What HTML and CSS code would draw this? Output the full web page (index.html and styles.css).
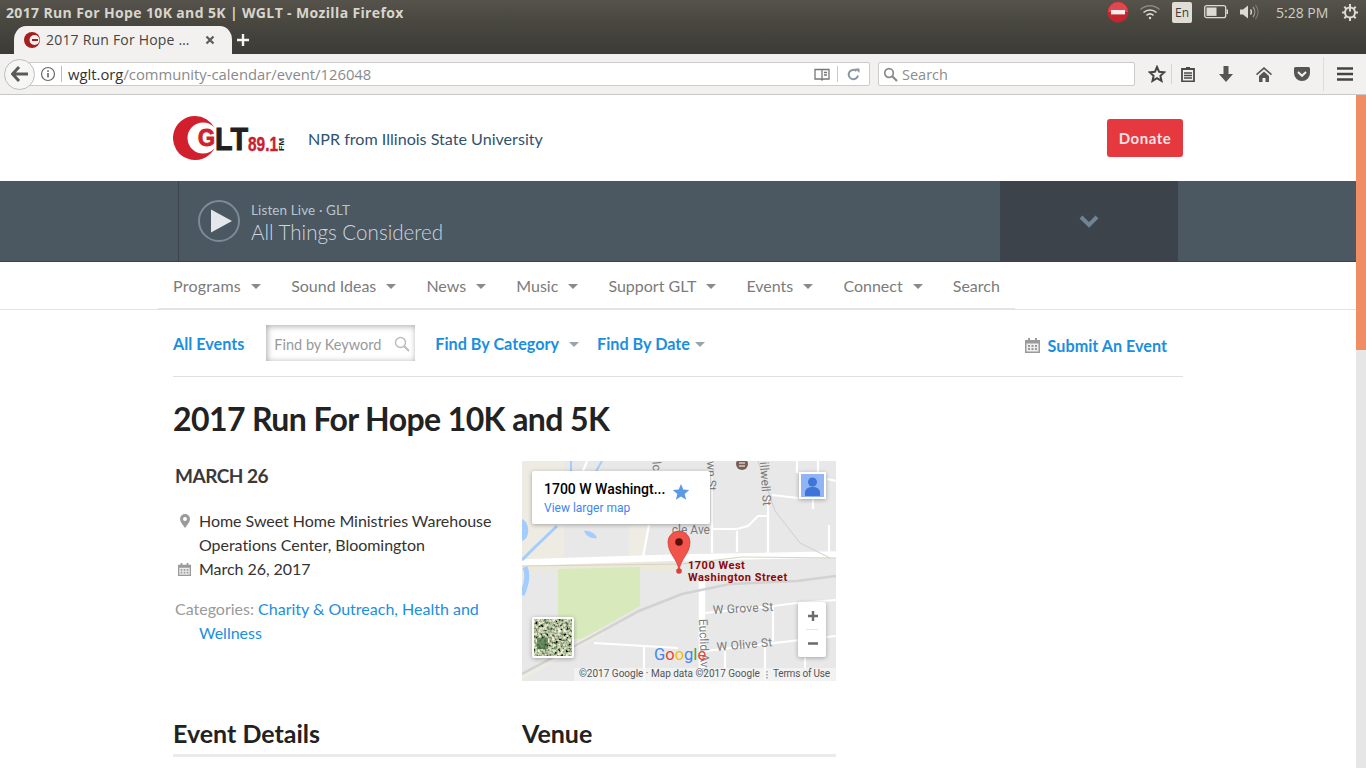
FILE: index.html
```html
<!DOCTYPE html>
<html lang="en">
<head>
<meta charset="utf-8">
<title>2017 Run For Hope 10K and 5K | WGLT</title>
<link rel="stylesheet" href="styles.css">
</head>
<body>
<div class="chrome">
  <div class="titlebar">
    <span class="wintitle">2017 Run For Hope 10K and 5K | WGLT - Mozilla Firefox</span>
    <div class="tray">
      <svg class="t-stop" width="24" height="24" viewBox="0 0 24 24"><circle cx="12" cy="12" r="10.500" fill="#c5252f"/><path d="M2 12a10 10 0 0 1 20 0z" fill="#e0484f"/><rect x="5" y="10" width="14" height="4.400" fill="#f4eeee"/></svg>
      <svg class="t-wifi" width="22" height="18" viewBox="0 0 22 18" fill="none" stroke="#dcdad5" stroke-width="1.500"><path d="M1.500 6.500a14 14 0 0 1 19 0" stroke="#8a8883"/><path d="M4.500 9.500a10 10 0 0 1 13 0"/><path d="M7.500 12.300a5.500 5.500 0 0 1 7 0"/><circle cx="11" cy="15" r="1.200" fill="#dcdad5" stroke="none"/></svg>
      <span class="t-en">En</span>
      <svg class="t-bat" width="24" height="14" viewBox="0 0 24 14"><rect x=".7" y=".7" width="21" height="12" rx="2" fill="none" stroke="#dcdad5" stroke-width="1.300"/><rect x="2.500" y="2.500" width="10" height="8.400" fill="#dcdad5"/><rect x="22.500" y="4.500" width="1.500" height="4.500" fill="#dcdad5"/></svg>
      <svg class="t-vol" width="20" height="18" viewBox="0 0 20 18" fill="none"><path d="M1 6.500h3l5-4v13l-5-4H1z" fill="#dcdad5"/><path d="M11.500 6.500a4 4 0 0 1 0 5" stroke="#dcdad5" stroke-width="1.300"/><path d="M14 4a8 8 0 0 1 0 10" stroke="#9a9893" stroke-width="1.300"/><path d="M16.500 2a11 11 0 0 1 0 14" stroke="#77756f" stroke-width="1.300"/></svg>
      <span class="t-time">5:28 PM</span>
      <svg class="t-gear" width="18" height="18" viewBox="0 0 18 18" fill="none" stroke="#dcdad5"><circle cx="9" cy="9.500" r="5" stroke-width="2"/><path d="M9 1.500v7" stroke-width="2"/><path d="M9 1v3M9 15v3M1 9.500h3M14 9.500h3M3.300 3.800l2 2M12.700 13.200l2 2M3.300 15.200l2-2M12.700 5.800l2-2" stroke-width="2"/></svg>
    </div>
  </div>
  <div class="tabbar">
    <div class="tab">
      <svg class="favicon" width="16" height="16" viewBox="0 0 16 16"><circle cx="8" cy="8" r="8" fill="#a3201f"/><circle cx="10.500" cy="8" r="5" fill="#f2f1ef"/><path d="M8 7h6v2H8z" fill="#a3201f"/></svg>
      <span class="tabtitle">2017 Run For Hope …</span>
      <svg class="tabclose" width="10" height="10" viewBox="0 0 10 10"><path d="M1.500 1.500l7 7M8.500 1.500l-7 7" stroke="#5c5b58" stroke-width="2.200"/></svg>
    </div>
    <svg class="newtab" width="14" height="14" viewBox="0 0 14 14"><path d="M7 1v12M1 7h12" stroke="#f5f5f3" stroke-width="2.400"/></svg>
  </div>
  <div class="navbar">
    <div class="back"><svg width="18" height="16" viewBox="0 0 18 16"><path d="M8 1L1.500 8 8 15M2 8h15" fill="none" stroke="#5a5a58" stroke-width="3"/></svg></div>
    <div class="urlbar">
      <svg class="info" width="16" height="16" viewBox="0 0 16 16"><circle cx="8" cy="8" r="6.500" fill="none" stroke="#666" stroke-width="1.200"/><rect x="7.200" y="7" width="1.600" height="4.500" fill="#666"/><rect x="7.200" y="4.300" width="1.600" height="1.600" fill="#666"/></svg>
      <span class="urlsep"></span>
      <span class="url"><b>wglt.org</b>/community-calendar/event/126048</span>
      <svg class="reader" width="16" height="13" viewBox="0 0 16 13" fill="none" stroke="#777" stroke-width="1.300"><path d="M1 1.500h14v9.500H9l-1 1-1-1H1z"/><path d="M8 1.500V11"/><path d="M10 4.500h3M10 7h3"/></svg>
      <span class="urlsep2"></span>
      <svg class="reload" width="13" height="13" viewBox="0 0 13 13" fill="none"><path d="M11 7.500A4.700 4.700 0 1 1 9.500 3" stroke="#8a96a3" stroke-width="2"/><path d="M8 .5h4.500V5z" fill="#8a96a3"/></svg>
    </div>
    <div class="searchbar">
      <svg width="15" height="15" viewBox="0 0 15 15" fill="none" stroke="#8a8a8a" stroke-width="1.700"><circle cx="6" cy="6" r="4.300"/><path d="M9.300 9.300L14 14" stroke-width="2.200"/></svg>
      <span>Search</span>
    </div>
    <div class="tools">
      <svg class="i-star" width="18" height="18" viewBox="0 0 18 18"><path d="M9 2l2.100 4.800 5.200.5-3.900 3.500 1.100 5.100L9 13.200l-4.500 2.700 1.100-5.100L1.700 7.300l5.200-.5z" fill="none" stroke="#444" stroke-width="2"/></svg>
      <span class="toolsep"></span>
      <svg class="i-list" width="14" height="16" viewBox="0 0 14 16"><path d="M1 3h12v12.500H1z" fill="none" stroke="#4a4a4a" stroke-width="1.800"/><path d="M5 1h4v3H5z" fill="#4a4a4a"/><path d="M3 7h8M3 9.500h8M3 12h8" stroke="#4a4a4a" stroke-width="1.300"/></svg>
      <svg class="i-down" width="14" height="16" viewBox="0 0 14 16"><path d="M4.500 0h5v8H14l-7 8-7-8h4.500z" fill="#555"/></svg>
      <svg class="i-home" width="16" height="16" viewBox="0 0 16 16"><path d="M8 1L0 8l1 1.200 7-6 7 6L16 8z" fill="#555"/><path d="M3 10l5-4.500 5 4.500v6H9.500v-4h-3v4H3z" fill="#555"/></svg>
      <svg class="i-pocket" width="16" height="14" viewBox="0 0 16 14"><path d="M1.500 0h13A1.500 1.500 0 0 1 16 1.500V6A8 8 0 0 1 0 6V1.500A1.500 1.500 0 0 1 1.500 0z" fill="#555"/><path d="M4 5l4 3.800L12 5" fill="none" stroke="#f2f1ef" stroke-width="2"/></svg>
      <span class="toolsep2"></span>
      <svg class="i-menu" width="16" height="14" viewBox="0 0 16 14"><path d="M0 1.500h16M0 7h16M0 12.500h16" stroke="#444" stroke-width="2.600"/></svg>
    </div>
  </div>
</div>

<div class="viewport">
  <main class="page">
    <header class="site-head">
      <svg class="logo" width="113" height="46" viewBox="0 0 113 46">
        <path fill-rule="evenodd" d="M22 1a22 22 0 0 1 19.500 11.800A15.500 15.500 0 0 0 30 7.500a15.500 15.500 0 0 0 0 31 15.500 15.500 0 0 0 11.500-5.300A22 22 0 1 1 22 1z" fill="#d11f2d"/>
        <text class="logo-g" x="25" y="31" textLength="17" lengthAdjust="spacingAndGlyphs">G</text>
        <text class="logo-lt" x="42" y="35" textLength="33" lengthAdjust="spacingAndGlyphs">LT</text>
        <text class="logo-num" x="75" y="36" textLength="30" lengthAdjust="spacingAndGlyphs">89.1</text>
        <text class="logo-fm" transform="translate(111 36) rotate(-90)" textLength="13" lengthAdjust="spacingAndGlyphs">FM</text>
      </svg>
      <span class="tagline">NPR from Illinois State University</span>
      <a class="donate">Donate</a>
    </header>

    <section class="player">
      <div class="player-main">
        <svg class="play" width="42" height="42" viewBox="0 0 42 42"><circle cx="21" cy="21" r="20" fill="none" stroke="#7b8b98" stroke-width="2"/><path d="M13 9.500L34 21 13 32.500z" fill="#e4e8ed"/></svg>
        <div class="player-text">
          <div class="listen">Listen Live · GLT</div>
          <div class="show">All Things Considered</div>
        </div>
      </div>
      <div class="player-toggle"><svg width="20" height="13" viewBox="0 0 20 13"><path d="M2 2l8 8 8-8" fill="none" stroke="#6f8494" stroke-width="4"/></svg></div>
    </section>

    <nav class="mainnav">
      <ul class="navlist">
        <li class="navitem caret">Programs</li>
        <li class="navitem caret">Sound Ideas</li>
        <li class="navitem caret">News</li>
        <li class="navitem caret">Music</li>
        <li class="navitem caret">Support GLT</li>
        <li class="navitem caret">Events</li>
        <li class="navitem caret">Connect</li>
        <li class="navitem">Search</li>
      </ul>
    </nav>

    <div class="content">
      <div class="filters">
        <a class="fl all">All Events</a>
        <div class="kw"><span>Find by Keyword</span><svg width="16" height="16" viewBox="0 0 16 16" fill="none" stroke="#bbb" stroke-width="1.400"><circle cx="6.500" cy="6.500" r="5"/><path d="M10 10l5 5" stroke-width="1.800"/></svg></div>
        <a class="fl cat caret2">Find By Category</a>
        <a class="fl date caret2">Find By Date</a>
        <a class="fl submit"><svg width="15" height="15" viewBox="0 0 15 15"><path d="M0 2h15v13H0z" fill="#9a9a9a"/><path d="M3 0h2v3H3zM10 0h2v3h-2z" fill="#9a9a9a"/><path d="M1.500 5.500h12V13.500h-12z" fill="#eee"/><path d="M3 7h2v2H3zM6.500 7h2v2h-2zM10 7h2v2h-2zM3 10h2v2H3zM6.500 10h2v2h-2zM10 10h2v2h-2z" fill="#9a9a9a"/></svg>Submit An Event</a>
      </div>

      <h1 class="title">2017 Run For Hope 10K and 5K</h1>

      <div class="event">
        <div class="meta">
          <h2 class="when">MARCH 26</h2>
          <div class="row">
            <svg class="ri" width="10" height="14" viewBox="0 0 10 14"><path fill-rule="evenodd" d="M5 0a5 5 0 0 1 5 5c0 3-3 6-5 9-2-3-5-6-5-9a5 5 0 0 1 5-5zm0 3a2 2 0 1 0 0 4 2 2 0 0 0 0-4z" fill="#9a9a9a"/></svg>
            <span>Home Sweet Home Ministries Warehouse Operations Center, Bloomington</span>
          </div>
          <div class="row">
            <svg class="ri cal" width="13" height="13" viewBox="0 0 15 15"><path d="M0 2h15v13H0z" fill="#9a9a9a"/><path d="M3 0h2v3H3zM10 0h2v3h-2z" fill="#9a9a9a"/><path d="M1.500 5.500h12V13.500h-12z" fill="#eee"/><path d="M3 7h2v2H3zM6.500 7h2v2h-2zM10 7h2v2h-2zM3 10h2v2H3zM6.500 10h2v2h-2zM10 10h2v2h-2z" fill="#9a9a9a"/></svg>
            <span>March 26, 2017</span>
          </div>
          <p class="cats"><span class="cats-l">Categories:</span> <a>Charity &amp; Outreach</a>, <a>Health and</a><br><a>Wellness</a></p>
        </div>
        <svg class="map" width="314" height="220" viewBox="0 0 314 220">
          <defs>
            <filter id="aerial" x="0" y="0" width="100%" height="100%">
              <feTurbulence type="fractalNoise" baseFrequency=".36" numOctaves="2" seed="7"/>
              <feColorMatrix type="matrix" values="1.900 0 0 0 -.52  1.900 0 0 0 -.46  1.500 0 0 0 -.42  0 0 0 0 1"/>
            </filter>
          </defs>
          <rect width="314" height="220" fill="#e8e8e8"/>
          <path d="M0 0h42v98H0z" fill="#eeebe3"/>
          <path d="M42 0h66v64H42z" fill="#e8e8e8"/>
          <path d="M107 64h20l-5 33h-15z" fill="#efece3"/>
          <path d="M0 104l157-4v10H0z" fill="#ebe8dc"/>
          <path d="M36 108l82-2v39l-58 33h-8l-16-21z" fill="#d8e9bc"/>
          <path d="M0 216l62-36 20-10" fill="none" stroke="#eeebe3" stroke-width="6"/>

          <g class="road">
            <path d="M190 0v92M190 68h25l11-3 10-10h10M215 70v21M246 34v58M250 34l26 3M305 18l9 2M291 38v10M307 64v28M275 0v12M296 0v12M65 0l-4 10M127 64l-6 32"/>
            <path d="M183 152l68-7 24-3 39-3M251 145v35M183 190l131-15M203 190v25M243 185v35M283 195v12M72 182l84 5M122 185v35"/>
          </g>
          <path class="road-main" d="M180 120v87"/>
          <path class="road-main" d="M0 101.500l157-5 157-3"/>
          <path d="M0 105l160-2 60-7 94 1" stroke="#d8d3bf" stroke-width="1" fill="none"/>
          <path class="rail" d="M0 213l62-33 55-30 43-17 48-10 67-3 39-5"/>
          <path d="M236 0l17 50 25 32 30 15" fill="none" stroke="#cfcfcf" stroke-width="1"/>
          <g fill="none" stroke="#a3ccff">
            <path d="M3 106c4 9 1 19-3 28" stroke-width="5"/>
            <path d="M0 99l12-12 23-22" stroke-width="3"/>
            <path d="M49 0v12M80 0l-7 12" stroke-width="2"/>
            <path d="M0 58c5 2 7 9 6 14-1 5-3 7-6 8z" fill="#a3ccff" stroke="none"/>
            <path d="M62 70c5-1 11 2 13 7-6 1-11-2-13-7z" fill="#a3ccff" stroke="none"/>
          </g>
          <text x="188" y="73" text-anchor="end" class="mlabel">cle Ave</text>
          <text x="191" y="153" class="mlabel big" transform="rotate(-3 191 153)">W Grove St</text>
          <text x="195" y="190" class="mlabel big" transform="rotate(-5 195 190)">W Olive St</text>
          <text x="177" y="158" class="mlabel" transform="rotate(88 177 158)">Euclid Ave</text>
          <text x="241" y="45" text-anchor="end" class="mlabel" transform="rotate(86 241 45)">illwell St</text>
          <text x="186" y="30" text-anchor="end" class="mlabel" transform="rotate(88 186 30)">wn St</text>
          <text x="131" y="10" text-anchor="end" class="mlabel" transform="rotate(86 131 10)">lc</text>
          <circle cx="220" cy="3" r="6" fill="#7b5e52"/>
          <path d="M217 2h6M217 5h6" stroke="#fff" stroke-width="1"/>
          <path d="M157 110c-1-12-11-17-11-29a11 11 0 0 1 22 0c0 12-10 17-11 29z" fill="#f0544b" stroke="#c8372f" stroke-width=".7"/>
          <circle cx="157" cy="81" r="3.800" fill="#5b0f0c"/>
          <circle cx="157" cy="110" r="2.800" fill="#dc3f38"/>
          <text x="166" y="108" class="pinlabel">1700 West</text>
          <text x="166" y="120" class="pinlabel">Washington Street</text>
          <rect x="10" y="10" width="178" height="53" rx="2" fill="#fff" class="mshadow"/>
          <text x="22" y="33" class="cardtitle">1700 W Washingt...</text>
          <path d="M159 23l2.300 5.500 5.900.5-4.500 3.900 1.400 5.800-5.100-3.100-5.100 3.100 1.400-5.800-4.500-3.900 5.900-.5z" fill="#5b9ae8"/>
          <text x="22" y="51" class="cardlink">View larger map</text>
          <rect x="277" y="11" width="27" height="27" fill="#fff" class="mshadow"/>
          <rect x="279" y="13" width="23" height="23" fill="#90b4f4"/>
          <circle cx="290.500" cy="21" r="4.500" fill="#3f74d8"/>
          <path d="M283 35v-4a7 5 0 0 1 15 0v4z" fill="#3f74d8"/>
          <rect x="10" y="156" width="42" height="41" rx="2" fill="#fff" class="mshadow"/>
          <rect x="12" y="158" width="38" height="37" filter="url(#aerial)"/>
          <path d="M15 177h11v11H15z" fill="#3e6a3c" opacity=".7"/>
          <path d="M29 158v37M12 172h38" stroke="#c9c6b0" stroke-width="1" opacity=".5"/>
          <rect x="276" y="141" width="28" height="55" rx="2" fill="#fff" class="mshadow"/>
          <path d="M284 168.500h12" stroke="#e5e5e5" stroke-width="1"/>
          <path d="M286 155h10M291 150v10M286 182.500h10" stroke="#6b6b6b" stroke-width="2.400"/>
          <text x="132" y="199" class="google"><tspan fill="#4285f4">G</tspan><tspan fill="#ea4335">o</tspan><tspan fill="#fbbc05">o</tspan><tspan fill="#4285f4">g</tspan><tspan fill="#34a853">l</tspan><tspan fill="#ea4335">e</tspan></text>
          <rect x="52" y="207" width="262" height="13" fill="#f5f5f5" opacity=".75"/>
          <text x="57" y="216" class="copy">©2017 Google · Map data ©2017 Google</text>
          <text x="251" y="216" class="copy terms">Terms of Use</text>
          <path d="M245 210v1.500M245 213v1.500M245 216v1.500" stroke="#777"/>
        </svg>
      </div>

      <div class="lower">
        <h2 class="sec sec-a">Event Details</h2>
        <h2 class="sec sec-b">Venue</h2>
      </div>
    </div>
  </main>
  <div class="scroll"><div class="thumb"></div></div>
</div>
</body>
</html>
```
FILE: styles.css
```css
* { box-sizing: border-box; }
html, body { margin: 0; padding: 0; height: 768px; overflow: hidden; background: #fff; }
body { font-family: "Lato", sans-serif; color: #333; display: flex; flex-direction: column; }
a { color: #1a8fe0; text-decoration: none; }
svg { display: block; flex: none; }

/* browser chrome */
.chrome { height: 95px; flex: none; font-family: "Open Sans", sans-serif; }
.titlebar { height: 24px; display: flex; align-items: center; justify-content: space-between; padding-left: 6px; background: linear-gradient(#55534b, #47463f); }
.wintitle { font-size: 14px; font-weight: 700; color: #d8d5cd; letter-spacing: .36px; }
.tray { display: flex; align-items: center; height: 24px; }
.t-stop { margin-right: 9px; }
.t-wifi { margin-right: 11px; }
.t-en { width: 20px; height: 21px; background: #e0ddd6; color: #3c3b37; border-radius: 2px; font-size: 12px; text-align: center; line-height: 21px; margin-right: 12px; }
.t-bat { margin-right: 11px; }
.t-vol { margin-right: 16px; }
.t-time { color: #cfcdc7; font-size: 14px; width: 53px; white-space: nowrap; margin-right: 12px; margin-left: 1px; }
.t-gear { margin-right: 7px; }

.tabbar { height: 30px; background: linear-gradient(#47463f, #3c3b36); display: flex; align-items: flex-end; padding-left: 14px; }
.tab { width: 218px; height: 28px; background: #f2f1ef; border-radius: 12px 12px 0 0 / 14px 14px 0 0; display: flex; align-items: center; padding-left: 10px; color: #444; }
.favicon { margin-right: 6px; }
.tabtitle { font-size: 14px; letter-spacing: .2px; width: 157px; white-space: nowrap; margin-top: -2px; }
.tabclose { margin-left: 2px; }
.newtab { margin: 0 0 7px 4px; }

.navbar { height: 41px; background: #f2f1ef; border-bottom: 1px solid #c9c9c7; display: flex; align-items: center; padding-left: 5px; }
.back { width: 31px; height: 31px; border-radius: 50%; background: #f6f6f5; border: 1px solid #bdbdbb; display: flex; align-items: center; justify-content: center; z-index: 1; flex: none; margin-left: -1px; }
.urlbar { width: 841px; margin-left: -6px; height: 24px; background: #fff; border: 1px solid #cbcbc9; border-radius: 0 2px 2px 0; display: flex; align-items: center; padding-left: 10px; }
.urlsep { width: 1px; height: 16px; background: #bbb; margin: 0 6px 0 5px; }
.url { font-size: 14.800px; color: #8a8a8a; width: 746px; white-space: nowrap; }
.url b { color: #333; font-weight: 400; }
.urlsep2 { width: 1px; height: 16px; background: #ccc; margin: 0 9px 0 7px; }
.searchbar { width: 257px; margin-left: 8px; height: 24px; background: #fff; border: 1px solid #cbcbc9; border-radius: 2px; display: flex; align-items: center; padding-left: 4px; gap: 4px; color: #8c8c8c; font-size: 14.500px; }
.tools { display: flex; align-items: center; height: 40px; padding-left: 13px; }
.toolsep { width: 1px; height: 20px; background: #d5d5d3; margin: 0 9px 0 5px; }
.i-down { margin-left: 24px; }
.i-home { margin-left: 23px; }
.i-pocket { margin-left: 22px; }
.toolsep2 { width: 1px; height: 34px; background: #dcdcda; margin: 0 13px 0 13px; }

/* page */
.viewport { flex: 1; display: flex; min-height: 0; }
.page { flex: 1; min-width: 0; overflow: hidden; }
.scroll { width: 10px; background: #e6e6e6; flex: none; }
.thumb { height: 255px; background: #f08d65; }

.site-head { height: 86px; display: flex; align-items: center; padding: 0 173px; }
.logo-g { font: 700 23px "Liberation Sans", sans-serif; fill: #d11f2d; stroke: #d11f2d; stroke-width: 1px; }
.logo-lt { font: 700 32px "Liberation Sans", sans-serif; fill: #231f20; stroke: #231f20; stroke-width: 1px; }
.logo-num { font: 700 19.500px "Liberation Sans", sans-serif; fill: #c8202f; stroke: #c8202f; stroke-width: .4px; }
.logo-fm { font: 700 6.500px "Liberation Sans", sans-serif; fill: #231f20; }
.tagline { margin-left: 22px; font-size: 16.100px; color: #2f5270; font-weight: 400; }
.donate { margin-left: auto; width: 76px; height: 38px; background: #e5383f; color: #f1e4e4; border-radius: 3px; font-size: 15px; font-weight: 700; text-align: center; line-height: 38px; letter-spacing: .5px; }

.player { height: 81px; background: #4b5761; display: flex; border-bottom: 1px solid #3c434a; padding-left: 178px; padding-right: 178px; }
.player-main { flex: 1; border-left: 1px solid #3c434a; display: flex; align-items: center; padding-left: 19px; }
.player-text { margin-left: 11px; padding-top: 5px; }
.listen { font-size: 13.500px; color: #b9c5ce; line-height: 17px; letter-spacing: .12px; }
.show { font-size: 20.600px; font-weight: 300; color: #cdd6dd; line-height: 27px; }
.player-toggle { width: 178px; background: #3c434a; display: flex; align-items: center; justify-content: center; margin-bottom: -1px; }

.mainnav { height: 48px; border-bottom: 1px solid #e3e3e3; padding-left: 158px; }
.navlist { list-style: none; margin: 0; padding: 0 15px; width: 857px; height: 48px; display: flex; align-items: center; border-bottom: 2px solid #e3e3e3; font-size: 16px; color: #7b7b7b; }
.navitem { white-space: nowrap; margin-right: 30.100px; }
.navitem:first-child { letter-spacing: .25px; }
.navitem:last-child { margin-right: 0; }
.caret::after { content: ""; display: inline-block; margin-left: 10px; vertical-align: 3px; border: 5px solid transparent; border-top: 5px solid #8a8a8a; border-bottom: 0; }

.content { padding: 0 173px; box-sizing: content-box; width: 1010px; }
.filters { height: 67px; display: flex; align-items: center; border-bottom: 1px solid #e0e0e0; font-size: 16.200px; }
.fl { font-weight: 700; white-space: nowrap; padding-top: 1px; }
.kw { margin-left: 22px; width: 149px; height: 36px; display: flex; align-items: center; justify-content: space-between; padding: 2px 5px 0 8px; box-shadow: inset 1px 1px 6px #a5a5a5; font-size: 14.500px; color: #999; }
.cat { margin-left: 20px; }
.date { margin-left: 18px; }
.caret2::after { content: ""; display: inline-block; margin-left: 10px; vertical-align: 3px; border: 5px solid transparent; border-top: 5px solid #9aa3aa; border-bottom: 0; }
.date.caret2::after { margin-left: 5px; }
.submit { margin-left: auto; margin-right: 16px; display: flex; align-items: center; gap: 8px; margin-top: 4px; }

.title { margin: 0; padding-top: 20px; height: 84px; font-size: 32px; line-height: 44px; font-weight: 700; color: #222; letter-spacing: -.6px; white-space: nowrap; }

.event { display: flex; height: 220px; }
.meta { width: 349px; padding-right: 20px; font-size: 16px; line-height: 24px; color: #333; letter-spacing: -.04px; }
.when { margin: 3px 0 0 2px; font-size: 19px; line-height: 24px; font-weight: 700; color: #3a3a3a; letter-spacing: -.5px; }
.row { display: flex; padding-left: 26px; position: relative; }
.when + .row { margin-top: 21px; }
.ri { position: absolute; left: 7px; top: 5px; }
.ri.cal { left: 5px; top: 6px; }
.cats { margin: 16px 0 0; padding-left: 26px; text-indent: -24px; color: #1a8fe0; letter-spacing: 0; }
.cats-l { color: #9a9a9a; }
.cats a { color: #1a8fe0; }

.map { flex: none; }
.road { fill: none; stroke: #fff; stroke-width: 2.200px; }
.road-main { fill: none; stroke: #fff; stroke-width: 6.500px; }
.rail { fill: none; stroke: #d2d2d2; stroke-width: 2.500px; }
.mshadow { filter: drop-shadow(0 1px 2px rgba(0,0,0,.3)); }
.mlabel { font: 12px "Roboto", sans-serif; fill: #7a7a7a; }
.mlabel.big { letter-spacing: .2px; }
.pinlabel { font: 700 11px "Roboto", sans-serif; fill: #8b0a0a; letter-spacing: .5px; }
.cardtitle { font: 500 14px "Roboto", sans-serif; fill: #000; }
.cardlink { font: 12px "Roboto", sans-serif; fill: #3f85f0; }
.google { font: 400 16.500px "Roboto", sans-serif; }
.copy { font: 10px "Roboto", sans-serif; fill: #555; }
.copy.terms { letter-spacing: -.2px; }

.lower { display: flex; width: 663px; margin-top: 34px; border-bottom: 3px solid #ebebeb; height: 42px; }
.sec { margin: 0; font-size: 25px; line-height: 36px; font-weight: 700; color: #222; }
.sec-a { width: 349px; }
```
